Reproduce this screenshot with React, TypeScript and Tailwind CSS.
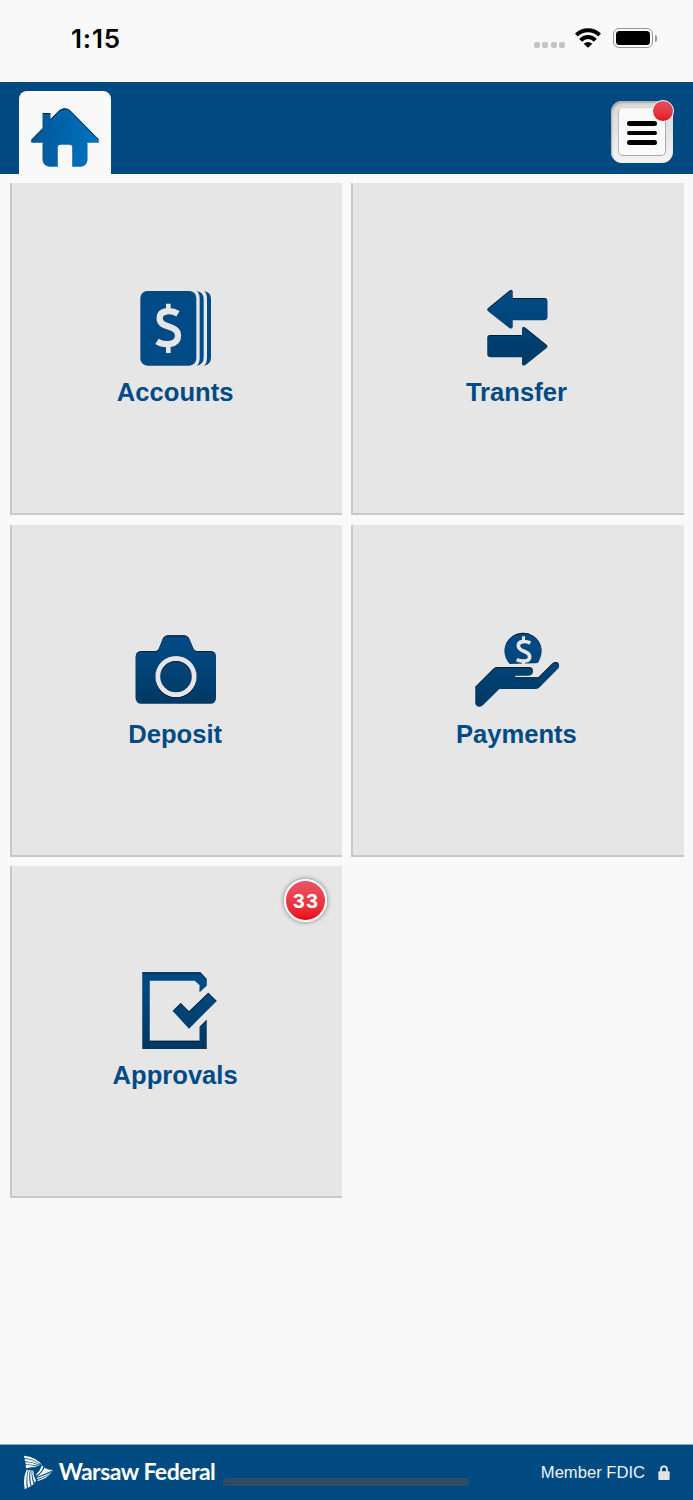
import type { ReactNode } from 'react';

const PAPER = '#e6e6e6';

// gradients and the dark upper edge shared by all of the tile icons
function IconDefs() {
  return (
    <svg className="absolute size-0" aria-hidden="true">
      <defs>
        <linearGradient id="navy" gradientUnits="userSpaceOnUse" x1="0" y1="60" x2="0" y2="300">
          <stop offset="0" stopColor="#004b87" />
          <stop offset="0.25" stopColor="#004880" />
          <stop offset="1" stopColor="#003761" />
        </linearGradient>
        <filter id="edge" x="-5%" y="-5%" width="110%" height="110%" colorInterpolationFilters="sRGB">
          <feOffset in="SourceAlpha" dy="4" dx="0" result="moved" />
          <feComposite in="SourceAlpha" in2="moved" operator="out" result="rim" />
          <feFlood floodColor="#0a1a2a" floodOpacity="0.85" />
          <feComposite in2="rim" operator="in" result="shade" />
          <feMerge>
            <feMergeNode in="SourceGraphic" />
            <feMergeNode in="shade" />
          </feMerge>
        </filter>
      </defs>
    </svg>
  );
}

function AccountsIcon() {
  return (
    <svg viewBox="3 0 450 315" className="h-[105px] w-[150px]">
      <g fill="#004b85">
        <rect x="121" y="63" width="168" height="224" rx="21" />
        <path d="M290 63Q311 66 311 88V262Q311 284 290 287Q299 280 299 264V86Q299 70 290 63Z" />
        <path d="M312 63Q333 66 333 88V262Q333 284 312 287Q321 280 321 264V86Q321 70 312 63Z" />
      </g>
      <path
        d="M234 131C219 122 179 116 179 145C179 177 234 162 234 197C234 228 190 226 171 214"
        fill="none"
        stroke={PAPER}
        strokeWidth="19"
      />
      <path d="M198 101H212V124H198ZM198 222H212V249H198Z" fill={PAPER} />
    </svg>
  );
}

function TransferIcon() {
  return (
    <svg viewBox="6 0 450 315" className="h-[105px] w-[150px]">
      <g fill="url(#navy)" filter="url(#edge)">
        <path d="M144 115L208 62Q217 56 218 66V84H312Q322 84 322 94V141Q322 151 312 151H218V170Q217 179 208 174L144 124Q140 119 144 115Z" />
        <path d="M320 225L256 173Q247 167 246 177V195H152Q142 195 142 205V252Q142 262 152 262H246V281Q247 290 256 285L320 234Q324 229 320 225Z" />
      </g>
    </svg>
  );
}

function DepositIcon() {
  return (
    <svg viewBox="3 5 450 315" className="h-[105px] w-[150px]">
      <path
        fill="url(#navy)"
        fillRule="evenodd"
        filter="url(#edge)"
        d="M125 122H168Q174 122 177 114L188 86Q193 75 206 75H250Q263 75 268 86L281 116Q284 122 290 122H330Q348 122 348 140V262Q348 280 330 280H125Q107 280 107 262V140Q107 122 125 122ZM228 137A62 62 0 1 0 228 261A62 62 0 1 0 228 137ZM228 152A47 47 0 1 1 228 246A47 47 0 1 1 228 152Z"
      />
    </svg>
  );
}

function PaymentsIcon() {
  return (
    <svg viewBox="6 6 450 315" className="h-[105px] w-[150px]">
      <g fill="url(#navy)" filter="url(#edge)">
        <path d="M209 162A55.5 55.5 0 1 1 298 150Q296 160 288 160H282Z" />
        <path d="M106 230L160 176Q165 171 172 171H265Q279 171 279 184Q279 197 265 197H226V202H295L336 161Q343 153 352 157Q360 163 356 174L299 232Q294 237 288 237H178L130 284Q124 291 116 290Q106 287 106 278Z" />
      </g>
      <path
        d="M271 99C259 93 235 91 235 107C235 127 269 120 269 140C269 157 244 155 230 149"
        fill="none"
        stroke={PAPER}
        strokeWidth="11"
      />
      <path d="M246 79H255V98H246ZM246 150H255V164H246Z" fill={PAPER} />
    </svg>
  );
}

function ApprovalsIcon() {
  return (
    <svg viewBox="3 10 450 315" className="h-[105px] w-[150px]">
      <g fill="url(#navy)" filter="url(#edge)">
        <path d="M127 68H301L320 88V108L299 128V107L284 93H149V273H299V231L320 210V298H127Z" />
        <path d="M218 184L242 160L267 185L325 129L350 154L267 237Z" />
      </g>
    </svg>
  );
}

function HomeIcon() {
  return (
    <svg viewBox="90 320 210 182" className="h-[60.67px] w-[70px]">
      <defs>
        <linearGradient id="home" gradientUnits="userSpaceOnUse" x1="95" y1="410" x2="297" y2="440">
          <stop offset="0" stopColor="#005796" />
          <stop offset="1" stopColor="#0074c2" />
        </linearGradient>
      </defs>
      <path
        fill="url(#home)"
        filter="url(#edge)"
        d="M94 418L128 384V338H151V357L178 330Q194 317 210 330L296 417V427H262V480Q260 497 243 499H217V442Q217 433 208 433H182Q173 433 173 442V499H148Q130 497 128 480V427H94Z"
      />
    </svg>
  );
}

function StatusBar() {
  return (
    <div className="flex h-[82px] items-start justify-between pr-[36.5px] pl-[71px]">
      <span className="mt-[23px] font-['Inter',sans-serif] text-[26px] leading-8 font-semibold tracking-[0.8px] text-black">
        1:15
      </span>
      <div className="mt-[28px] flex items-start">
        <div className="mt-[14px] flex gap-[2.5px]">
          <i className="size-[6px] rounded-[2px] bg-[#c5c5c5]" />
          <i className="size-[6px] rounded-[2px] bg-[#c5c5c5]" />
          <i className="size-[6px] rounded-[2px] bg-[#c5c5c5]" />
          <i className="size-[6px] rounded-[2px] bg-[#c5c5c5]" />
        </div>
        <svg viewBox="0 0 78 60" className="ml-[10px] h-5 w-[26px]">
          <g fill="none" stroke="#000" strokeWidth="12">
            <path d="M4 21Q19 7 39 7Q59 7 74 21" />
            <path d="M17 37Q26 27 39 27Q52 27 61 37" />
          </g>
          <path d="M26 47Q39 37 52 47L39 59Z" />
        </svg>
        <div className="ml-[12px] flex items-center">
          <div className="h-5 w-10 rounded-[6px] border-[1.5px] border-[#949494] p-[2px]">
            <div className="h-full rounded-[3.5px] bg-black" />
          </div>
          <div className="ml-[1.5px] h-[7px] w-[2px] rounded-r-full bg-[#999]" />
        </div>
      </div>
    </div>
  );
}

function Header() {
  return (
    <header className="flex h-[92px] items-end justify-between bg-[#004a82] pr-5 pl-[19px]">
      <a
        href="#home"
        aria-label="Home"
        className="flex h-[83px] w-[92px] justify-center rounded-t-[8px] bg-[#f9f9f9] pt-[16px]"
      >
        <HomeIcon />
      </a>
      <button
        type="button"
        aria-label="Menu"
        className="relative mb-[11px] flex h-[62px] w-[62px] items-center justify-center rounded-[11px] bg-linear-to-b from-[#d8d8d8] to-[#f3f3f3] shadow-[inset_1px_2px_2px_#aaa]"
      >
        <span className="flex h-[48px] w-[48px] flex-col items-center justify-center gap-[5px] rounded-[5px] border-[1.5px] border-t-[#eee] border-r-[#aaa] border-b-[#aaa] border-l-[#bbb] bg-[#fafafa] pt-[2px]">
          <i className="h-[4.7px] w-[30px] rounded-full bg-black" />
          <i className="h-[4.7px] w-[30px] rounded-full bg-black" />
          <i className="h-[4.7px] w-[30px] rounded-full bg-black" />
        </span>
        <span className="absolute -top-[1.5px] -right-[1px] size-[22px] rounded-full border-[1.5px] border-white bg-linear-to-b from-[#e44f60] to-[#e61020]" />
      </button>
    </header>
  );
}

type TileProps = {
  label: string;
  icon: ReactNode;
  count?: number;
};

function Tile({ label, icon, count }: TileProps) {
  return (
    <a
      href="#"
      className="relative flex h-[332px] flex-col items-center border-b-2 border-l-2 border-[#c8c8c8] bg-[#e6e6e6] pt-[87px] pr-[2px]"
    >
      {icon}
      <span className="mt-[3px] mr-[2px] text-[25.6px] leading-[28px] font-bold text-[#004b87]">
        {label}
      </span>
      {count ? (
        <span className="absolute top-[13px] right-[15px] flex size-[43px] items-center justify-center rounded-full border-2 border-white bg-linear-to-b from-[#e95566] to-[#e90018] pl-px text-[21px] font-bold tracking-[1.5px] text-white shadow-[0_0_5px_#777]">
          {count}
        </span>
      ) : null}
    </a>
  );
}

const tiles: TileProps[] = [
  { label: 'Accounts', icon: <AccountsIcon /> },
  { label: 'Transfer', icon: <TransferIcon /> },
  { label: 'Deposit', icon: <DepositIcon /> },
  { label: 'Payments', icon: <PaymentsIcon /> },
  { label: 'Approvals', icon: <ApprovalsIcon />, count: 33 },
];

function Logo() {
  return (
    <svg viewBox="70 75 92 104" className="h-[34.67px] w-[30.67px]" fill="#fff">
      {/* upper wing */}
      <path d="M73 77Q110 80 127 106Q104 87 74 84Z" />
      <path d="M75 87Q103 87 123 107Q100 95 76 94Z" />
      <path d="M77 97Q101 96 119 109Q98 103 78 103Z" />
      <path d="M78 105Q98 104 113 111Q94 111 79 115Z" />
      {/* right wing */}
      <path d="M161 120Q146 121 134 113Q132 123 111 141Q134 132 161 120Z" />
      <path d="M160 122Q142 134 111 144L112 147Q138 141 160 122Z" />
      <path d="M156 127Q140 142 113 150L115 153Q141 147 156 127Z" />
      <path d="M131 108Q131 121 110 137L110 133Q123 120 126 107Z" />
      {/* lower wing */}
      <path d="M81 119Q69 144 75 177L82 175Q77 146 85 119Z" />
      <path d="M87 120Q80 144 85 173L93 169Q85 143 91 120Z" />
      <path d="M93 121Q89 145 96 167L102 162Q94 143 96 121Z" />
      <path d="M98 121Q97 142 105 158L109 152Q101 139 101 122Z" />
    </svg>
  );
}

function Footer() {
  return (
    <footer className="relative flex h-14 items-center justify-between border-t border-[#8aa9c2] bg-[#004a82] pr-[23px] pl-[23px] text-white">
      <div className="flex items-center">
        <Logo />
        <span className="-mt-[3px] ml-[5px] font-['Lato',sans-serif] text-[23px] leading-7 font-bold tracking-[-0.5px]">
          Warsaw Federal
        </span>
      </div>
      <div className="flex items-center">
        <span className="text-[16.6px] leading-5 text-[#edf3f8]">Member FDIC</span>
        <svg viewBox="0 0 36 46" className="ml-[13px] h-[15.3px] w-3">
          <path d="M9 22V13Q9 4 18 4Q27 4 27 13V22" fill="none" stroke="#f2f2f2" strokeWidth="5" />
          <rect x="1" y="19" width="34" height="26" rx="3" fill="#e3e3e3" />
        </svg>
      </div>
      <div className="absolute bottom-[14px] left-[223px] h-[8px] w-[246px] rounded-full bg-[#304b66]" />
    </footer>
  );
}

export default function App() {
  return (
    <div className="flex h-[1500px] w-[693px] flex-col overflow-hidden bg-[#f9f9f9] font-['Liberation_Sans',Arial,sans-serif]">
      <IconDefs />
      <StatusBar />
      <Header />
      <main className="grid flex-1 grid-cols-2 content-start gap-x-[9px] gap-y-[9.7px] pt-[9px] pr-[9.5px] pl-[10px]">
        {tiles.map((tile) => (
          <Tile key={tile.label} {...tile} />
        ))}
      </main>
      <Footer />
    </div>
  );
}
